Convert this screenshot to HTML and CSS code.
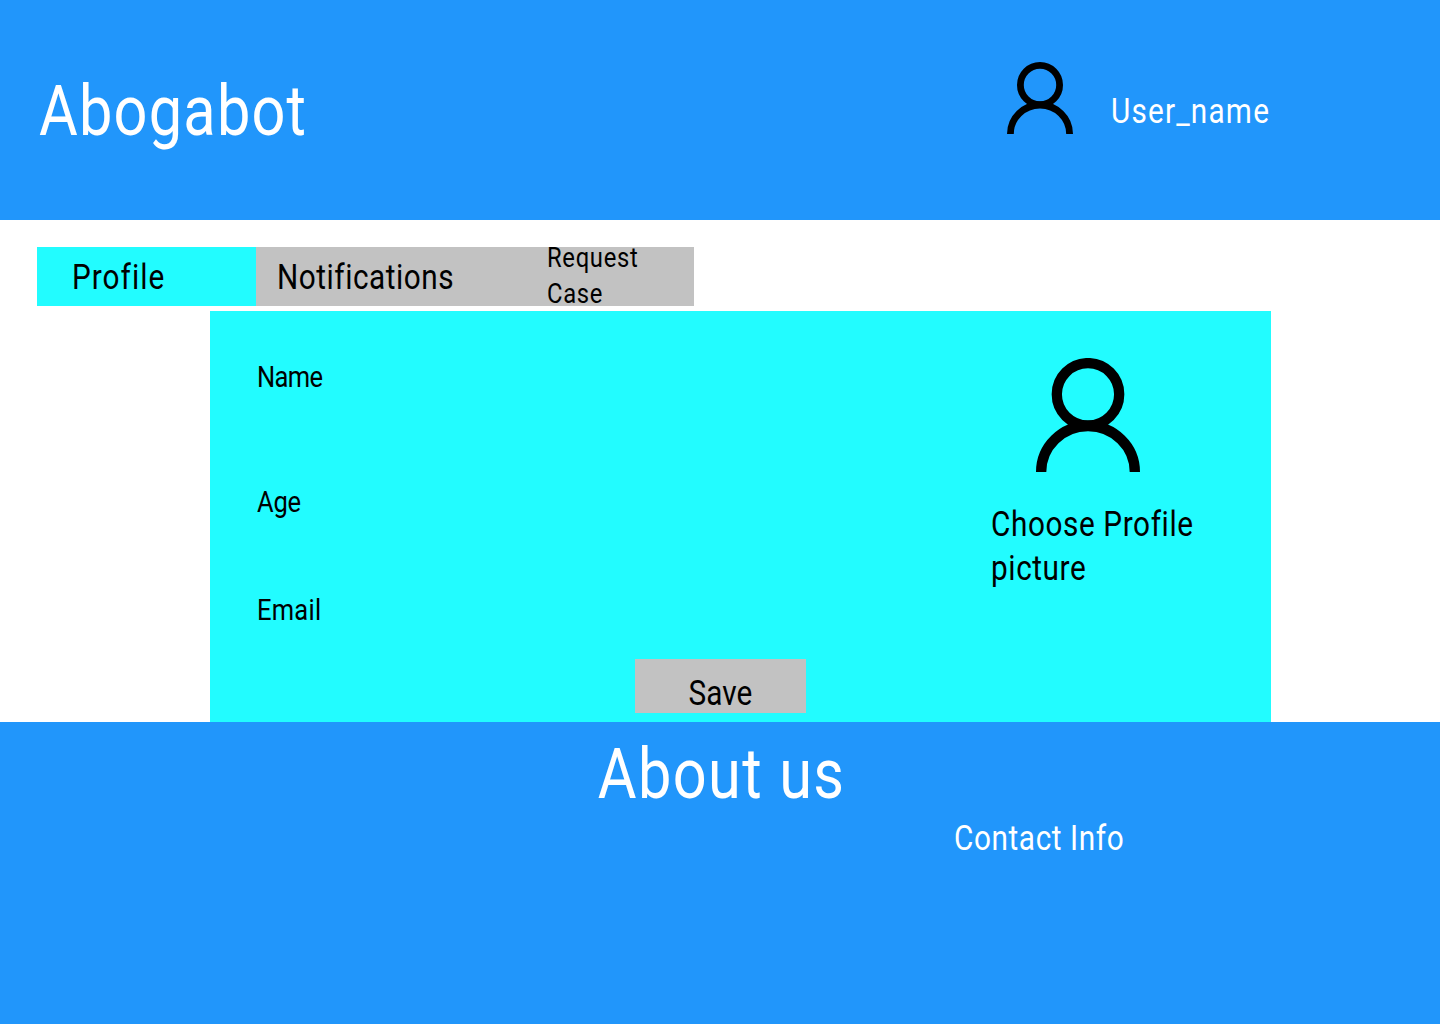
FILE: index.html
```html
<!DOCTYPE html>
<html lang="en">
<head>
<meta charset="utf-8">
<title>Abogabot</title>
<link rel="stylesheet" href="styles.css">
</head>
<body>
<header class="site-header">
  <h1 class="brand"><span class="narrow">Abogabot</span></h1>
  <div class="user">
    <svg class="user-icon" viewBox="0 0 66 72" aria-hidden="true"><circle cx="33" cy="23" r="19.600"/><path d="M3.400 72A29.600 29 0 0 1 62.600 72"/></svg>
    <span class="user-name narrow">User_name</span>
  </div>
</header>
<main class="content">
  <nav class="tabs">
    <a class="tab tab-active"><span class="narrow tab-profile-text">Profile</span></a>
    <a class="tab tab-notifications"><span class="narrow tab-notifications-text">Notifications</span></a>
    <a class="tab tab-request"><span class="narrow request-text">Request Case</span></a>
  </nav>
  <section class="panel">
    <div class="fields">
      <label class="field field-name"><span class="narrow">Name</span></label>
      <label class="field field-age"><span class="narrow">Age</span></label>
      <label class="field field-email"><span class="narrow">Email</span></label>
    </div>
    <div class="picture">
      <svg class="picture-icon" viewBox="0 0 104 114" aria-hidden="true"><circle cx="52" cy="36.300" r="31.200"/><path d="M5.150 114A46.850 46 0 0 1 98.850 114"/></svg>
      <p class="picture-label narrow">Choose Profile picture</p>
    </div>
    <button class="save" type="button"><span class="narrow-center">Save</span></button>
  </section>
</main>
<footer class="site-footer">
  <h2 class="about"><span class="narrow-center">About us</span></h2>
  <p class="contact"><span class="narrow">Contact Info</span></p>
</footer>
</body>
</html>
```
FILE: styles.css
```css
* { box-sizing: border-box; }
html, body { margin: 0; padding: 0; }
body {
  width: 1440px;
  height: 1024px;
  overflow: hidden;
  background: #fff;
  color: #000;
  font-family: Roboto, "Liberation Sans", sans-serif;
}
.narrow {
  display: inline-block;
  transform: scaleX(0.85);
  transform-origin: left center;
}
.narrow-center {
  display: inline-block;
  transform: scaleX(0.85);
  transform-origin: center;
}
.site-header {
  height: 220px;
  background: #2196fb;
  color: #fff;
  display: flex;
  align-items: center;
  padding-left: 39px;
}
.brand {
  margin: 2px 0 0;
  width: 968px;
  font-size: 70px;
  font-weight: 400;
  line-height: 1;
  letter-spacing: 1.400px;
}
.user { display: flex; align-items: center; gap: 38px; }
.user-icon { display: block; width: 66px; height: 72px; margin-top: -24px; fill: none; stroke: #000; stroke-width: 6.800; }
.user-name { margin-top: 3px; font-size: 35px; white-space: nowrap; letter-spacing: 1.400px; }
.content { height: 502px; padding-top: 27px; }
.tabs { display: flex; height: 59px; margin-left: 37px; }
.tab {
  width: 219px;
  background: #c2c2c2;
  display: flex;
  align-items: center;
  padding-top: 2px;
  font-size: 35px;
}
.tab-active { background: #22fcff; padding-left: 35px; }
.tab-profile-text { letter-spacing: 1.200px; }
.tab-notifications { padding-left: 21px; }
.tab-notifications-text { letter-spacing: 0.630px; }
.tab-request {
  padding: 0 0 1px 72px;
  font-size: 28px;
  line-height: 36px;
}
.request-text { width: 120px; letter-spacing: 0.800px; }
.panel {
  position: relative;
  width: 1061px;
  height: 411px;
  margin: 5px 0 0 210px;
  background: #22fcff;
  display: flex;
  justify-content: space-between;
  padding: 47px 0 0 47px;
}
.fields { display: flex; flex-direction: column; }
.field { display: block; font-size: 30px; line-height: 38px; }
.field-name { letter-spacing: -0.800px; }
.field-age { margin-top: 87px; letter-spacing: -0.300px; }
.field-email { margin-top: 70px; letter-spacing: 0.300px; }
.picture { width: 280px; }
.picture-icon { display: block; width: 104px; height: 114px; margin-left: 45px; fill: none; stroke: #000; stroke-width: 10.300; }
.picture-label { margin: 31px 0 0; width: 280px; font-size: 35px; line-height: 44px; letter-spacing: 0.700px; }
.save {
  position: absolute;
  left: 425px;
  top: 348px;
  width: 171px;
  height: 54px;
  border: 0;
  padding: 15px 0 0;
  background: #c2c2c2;
  color: #000;
  font: inherit;
  font-size: 35px;
  line-height: 40px;
}
.site-footer {
  height: 302px;
  background: #2196fb;
  color: #fff;
  padding: 14px 0 0 4px;
}
.about {
  margin: 0;
  text-align: center;
  font-size: 70px;
  font-weight: 400;
  line-height: 76px;
  letter-spacing: 1.600px;
}
.contact { margin: 5px 0 0 950px; font-size: 35px; line-height: 44px; letter-spacing: 0.700px; }
```
